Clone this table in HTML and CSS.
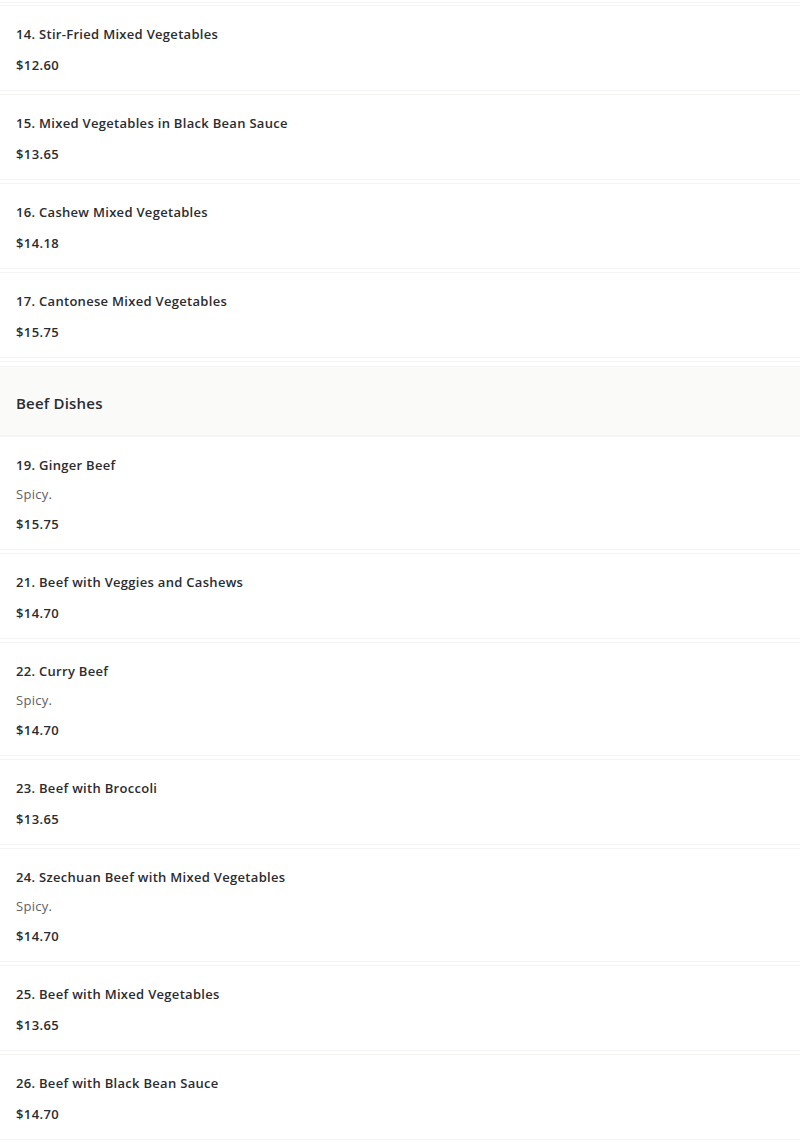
FILE: index.html
```html
<!DOCTYPE html>
<html lang="en">
<head>
<meta charset="utf-8">
<title>Menu</title>
<link rel="stylesheet" href="styles.css">
</head>
<body>
<div class="menu">
  <div class="tail"></div>
  <div class="item"><div class="title">14. Stir-Fried Mixed Vegetables</div><div class="price">$12.60</div></div>
  <div class="item"><div class="title">15. Mixed Vegetables in Black Bean Sauce</div><div class="price">$13.65</div></div>
  <div class="item"><div class="title">16. Cashew Mixed Vegetables</div><div class="price">$14.18</div></div>
  <div class="item"><div class="title">17. Cantonese Mixed Vegetables</div><div class="price">$15.75</div></div>
  <div class="section"><h2 class="section-title">Beef Dishes</h2></div>
  <div class="item"><div class="title with-desc">19. Ginger Beef</div><div class="desc">Spicy.</div><div class="price">$15.75</div></div>
  <div class="item"><div class="title">21. Beef with Veggies and Cashews</div><div class="price">$14.70</div></div>
  <div class="item"><div class="title with-desc">22. Curry Beef</div><div class="desc">Spicy.</div><div class="price">$14.70</div></div>
  <div class="item"><div class="title">23. Beef with Broccoli</div><div class="price">$13.65</div></div>
  <div class="item"><div class="title with-desc">24. Szechuan Beef with Mixed Vegetables</div><div class="desc">Spicy.</div><div class="price">$14.70</div></div>
  <div class="item"><div class="title">25. Beef with Mixed Vegetables</div><div class="price">$13.65</div></div>
  <div class="item"><div class="title">26. Beef with Black Bean Sauce</div><div class="price">$14.70</div></div>
</div>
</body>
</html>
```
FILE: styles.css
```css
html, body {
  margin: 0;
  padding: 0;
  background: #ffffff;
}
body {
  font-family: "Open Sans", "Noto Sans", sans-serif;
  color: #2a2c30;
}
.menu {
  display: flex;
  flex-direction: column;
}
.tail {
  height: 2px;
  border-bottom: 1px solid #f4f4f2;
  margin-bottom: 2px;
}
.item {
  border-top: 1px solid #f4f4f2;
  border-bottom: 1px solid #f4f4f2;
  margin-bottom: 3px;
  padding: 18px 16px 15px;
  display: flex;
  flex-direction: column;
}
.title {
  font-size: 13px;
  font-weight: 600;
  line-height: 20px;
  letter-spacing: 0.3px;
  margin-bottom: 11px;
}
.title.with-desc {
  margin-bottom: 9px;
}
.desc {
  font-size: 13px;
  font-weight: 400;
  line-height: 20px;
  letter-spacing: 0.3px;
  color: #5f6063;
  margin-bottom: 10px;
}
.price {
  font-size: 13px;
  font-weight: 600;
  line-height: 20px;
  letter-spacing: 0.4px;
}
.section {
  border-top: 1px solid #f4f4f2;
  padding-top: 4px;
}
.section-title {
  margin: 0;
  background: #fafaf9;
  border-top: 1px solid #f4f4f2;
  border-bottom: 1px solid #f4f4f2;
  padding: 26px 16px 22px;
  font-size: 15px;
  font-weight: 600;
  line-height: 20px;
  letter-spacing: 0.2px;
}
```
